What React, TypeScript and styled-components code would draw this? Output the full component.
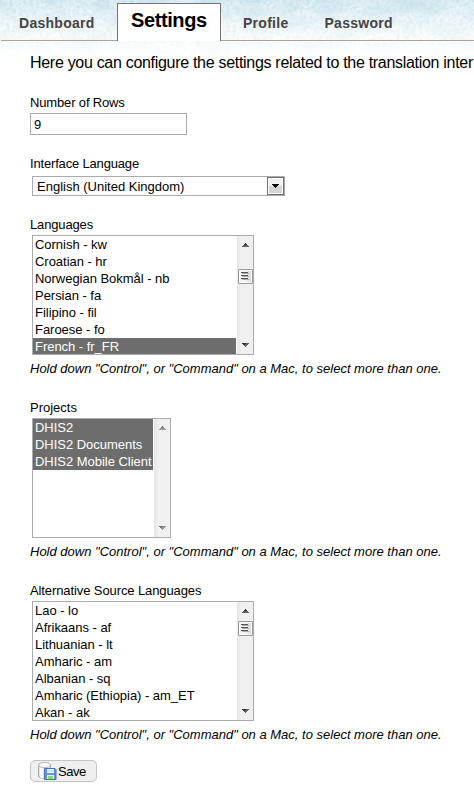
import React from "react";
import styled, { createGlobalStyle } from "styled-components";

const GlobalStyle = createGlobalStyle`
  * { box-sizing: border-box; }
  body {
    margin: 0;
    background: #fff;
    color: #000;
    font: 13px/17px "Liberation Sans", Arial, sans-serif;
    overflow: hidden;
  }
`;

const Page = styled.div`
  width: 474px;
  height: 795px;
  overflow: hidden;
  position: relative;
  isolation: isolate;
`;

const Sky = styled.svg`
  position: absolute;
  inset: 0 0 auto;
  z-index: -1;
`;

const Tabs = styled.nav`
  display: flex;
  align-items: flex-end;
  height: 41px;
  margin-left: 1px;
  white-space: nowrap;
`;

const Tab = styled.a<{ $w: number; $pad: number }>`
  width: ${(p) => p.$w}px;
  height: 41px;
  flex: none;
  padding: 14px 0 0 ${(p) => p.$pad}px;
  border-bottom: 1px solid #aaa49b;
  color: #48443f;
  font-weight: bold;
  font-size: 14px;
  line-height: 18px;
  letter-spacing: 0.27px;
`;

const ActiveTab = styled.a`
  width: 104px;
  height: 38px;
  flex: none;
  padding: 4px 0 0 13px;
  border: 1px solid #77736e;
  border-bottom: 0;
  background: #fff;
  font-weight: bold;
  font-size: 20px;
  line-height: 24px;
  letter-spacing: -0.4px;
`;

const Form = styled.form`
  padding: 12px 0 0 30px;
  white-space: nowrap;
`;

const Intro = styled.p`
  margin: 0 0 21px;
  font-size: 16px;
  line-height: 20px;
  letter-spacing: -0.3px;
`;

const Field = styled.section<{ $h: number }>`
  height: ${(p) => p.$h}px;
`;

const Label = styled.div<{ $track?: number }>`
  height: 19px;
  letter-spacing: ${(p) => p.$track ?? 0}px;
`;

const TextBox = styled.div`
  width: 157px;
  height: 22px;
  border: 1px solid #aaaaaf;
  padding: 3px 3px 0;
  line-height: 16px;
`;

const Dropdown = styled.div`
  display: flex;
  justify-content: space-between;
  width: 253px;
  height: 20px;
  margin: 2px 0 0 2px;
  border: 1px solid #aaaaaf;
  padding-left: 4px;
  line-height: 19px;
`;

const DropButton = styled.span`
  display: flex;
  align-items: center;
  justify-content: center;
  width: 17px;
  height: 18px;
  border: 1px solid #707070;
  box-shadow: inset 0 0 0 1px #fff;
  background: linear-gradient(#f0f0f0 50%, #d4d4d4 50%);
`;

const ListFrame = styled.div<{ $w: number }>`
  display: flex;
  width: ${(p) => p.$w}px;
  height: 120px;
  margin-left: 2px;
  border: 1px solid #aaaaaf;
  overflow: hidden;
`;

const Options = styled.div`
  flex: 1;
  min-width: 0;
  margin-right: 1px;
`;

const Option = styled.div<{ $on?: boolean }>`
  height: 17px;
  padding-left: 2px;
  line-height: 17px;
  letter-spacing: -0.03px;
  color: ${(p) => (p.$on ? "#fff" : "#000")};
  background: ${(p) => (p.$on ? "#6d6d6d" : "transparent")};
`;

const Track = styled.div`
  display: flex;
  flex-direction: column;
  align-items: center;
  width: 16px;
  height: 118px;
  padding: 7px 0;
  background: linear-gradient(90deg, #e5e5e5, #f0f0f0 4px, #f0f0f0);
`;

const Thumb = styled.div<{ $gap: number }>`
  display: flex;
  align-items: center;
  justify-content: center;
  width: 15px;
  height: 15px;
  margin-top: ${(p) => p.$gap}px;
  border: 1px solid #999;
  border-radius: 1px;
  box-shadow: inset 0 0 0 1px #fafafa;
  background: linear-gradient(90deg, #f4f4f4 45%, #d5d5d5);
`;

const Bottom = styled.div`
  display: flex;
  margin-top: auto;
`;

const Hint = styled.div`
  margin-top: 5px;
  font-style: italic;
`;

const SaveButton = styled.button`
  display: flex;
  align-items: center;
  width: 67px;
  height: 22px;
  margin-top: -5px;
  padding: 0 0 0 6px;
  gap: 1px;
  border: 1px solid #c5c5c5;
  border-radius: 5px;
  background: #efefef;
  color: #000;
  font: 13px/20px "Liberation Sans", Arial, sans-serif;
  letter-spacing: -0.5px;
`;

const SaveText = styled.span`
  padding-top: 1px;
`;

const NextTabText = styled.span`
  margin-left: 36px;
`;

function Arrow({ up, muted }: { up?: boolean; muted?: boolean }) {
  return (
    <svg width="7" height="4" shapeRendering="crispEdges">
      <path
        d={up ? "M3 0h1v1h1v1h1v1h1v1H0V3h1V2h1V1h1z" : "M0 0h7v1H6v1H5v1H4v1H3V3H2V2H1V1H0z"}
        fill={muted ? "#999" : "#606060"}
      />
      <path
        d={up ? "M3 0h1v1h1v1H2V1h1z" : "M0 0h4v1H3v1H1V1H0z"}
        fill={muted ? "#777" : "#303030"}
      />
    </svg>
  );
}

function ScrollBar({ thumb }: { thumb?: number }) {
  const muted = thumb === undefined;
  return (
    <Track>
      <Arrow up muted={muted} />
      {thumb !== undefined && (
        <Thumb $gap={thumb}>
          <svg width="8" height="9" shapeRendering="crispEdges">
            <path d="M0 .5h7M0 3.5h7M0 6.5h7" stroke="#555" />
            <path d="M1 1.5h7M1 4.5h7M1 7.5h7" stroke="#aaa" />
          </svg>
        </Thumb>
      )}
      <Bottom>
        <Arrow muted={muted} />
      </Bottom>
    </Track>
  );
}

interface ListProps {
  label: string;
  labelTrack?: number;
  width: number;
  items: string[];
  selected?: string[];
  thumb?: number;
}

function MultiSelect({ label, labelTrack, width, items, selected = [], thumb }: ListProps) {
  return (
    <Field $h={183}>
      <Label $track={labelTrack}>{label}</Label>
      <ListFrame $w={width}>
        <Options>
          {items.map((name) => (
            <Option key={name} $on={selected.includes(name)}>
              {name}
            </Option>
          ))}
        </Options>
        <ScrollBar thumb={thumb} />
      </ListFrame>
      <Hint>Hold down "Control", or "Command" on a Mac, to select more than one.</Hint>
    </Field>
  );
}

const languages = [
  "Cornish - kw",
  "Croatian - hr",
  "Norwegian Bokmål - nb",
  "Persian - fa",
  "Filipino - fil",
  "Faroese - fo",
  "French - fr_FR",
];

const projects = ["DHIS2", "DHIS2 Documents", "DHIS2 Mobile Client"];

const sources = [
  "Lao - lo",
  "Afrikaans - af",
  "Lithuanian - lt",
  "Amharic - am",
  "Albanian - sq",
  "Amharic (Ethiopia) - am_ET",
  "Akan - ak",
];

function SkyTexture() {
  return (
    <Sky width="474" height="60" aria-hidden="true">
      <defs>
        <linearGradient id="fade" x2="0" y2="1">
          <stop offset="0" stopColor="#d9eaf1" />
          <stop offset=".4" stopColor="#e7f2f6" />
          <stop offset=".72" stopColor="#f9fcfd" />
          <stop offset="1" stopColor="#fff" />
        </linearGradient>
        <linearGradient id="veil" x2="0" y2="1">
          <stop offset="0" stopColor="#fff" stopOpacity=".2" />
          <stop offset=".75" stopColor="#fff" stopOpacity=".8" />
          <stop offset="1" stopColor="#fff" />
        </linearGradient>
        <filter id="clouds" x="0" y="0" width="1" height="1" colorInterpolationFilters="sRGB">
          <feTurbulence type="fractalNoise" baseFrequency=".03 .06" numOctaves="3" seed="21" />
          <feColorMatrix values="0 0 0 0 .66  0 0 0 0 .82  0 0 0 0 .88  1.3 0 0 0 -.5" />
        </filter>
        <filter id="grain" x="0" y="0" width="1" height="1" colorInterpolationFilters="sRGB">
          <feTurbulence type="fractalNoise" baseFrequency=".3" numOctaves="2" seed="4" />
          <feColorMatrix values="0 0 0 0 .64  0 0 0 0 .81  0 0 0 0 .87  1.5 0 0 0 -.6" />
        </filter>
      </defs>
      <rect width="474" height="60" fill="url(#fade)" />
      <rect width="474" height="60" filter="url(#clouds)" />
      <rect width="474" height="60" filter="url(#grain)" />
      <rect width="474" height="60" fill="url(#veil)" />
    </Sky>
  );
}

function SaveIcon() {
  return (
    <svg width="20" height="20" viewBox="0 0 20 20">
      <path d="M1.500 4v11c0 3 12 3 12 0V4" fill="#e7e7e7" stroke="#aaa" />
      <path d="M3 6v10c1 1 2 1 3 1V7z" fill="#fff" />
      <ellipse cx="7.5" cy="4" rx="6" ry="2.5" fill="#fafafa" stroke="#b5b5b5" />
      <path d="M7.500 7.500h10.500l1 1v10h-11.500z" fill="#6592d6" stroke="#4571bc" />
      <path d="M10 8h7v4h-7z" fill="#f4f9ff" />
      <path d="M10 10h7" stroke="#a9c5eb" />
      <path d="M10 14h7v4h-7z" fill="#e2f5d9" />
      <path d="M11 15h5v3h-5z" fill="#8cd96a" />
    </svg>
  );
}

export default function App() {
  return (
    <>
      <GlobalStyle />
      <Page>
        <SkyTexture />
        <Tabs>
          <Tab $w={116} $pad={18}>Dashboard</Tab>
          <ActiveTab>Settings</ActiveTab>
          <Tab $w={253} $pad={22}>
            Profile<NextTabText>Password</NextTabText>
          </Tab>
        </Tabs>
        <Form>
          <Intro>Here you can configure the settings related to the translation inter</Intro>
          <Field $h={61}>
            <Label $track={-0.15}>Number of Rows</Label>
            <TextBox>9</TextBox>
          </Field>
          <Field $h={61}>
            <Label $track={-0.17}>Interface Language</Label>
            <Dropdown>
              English (United Kingdom)
              <DropButton>
                <svg width="7" height="4" shapeRendering="crispEdges">
                  <path d="M0 0h7v1H6v1H5v1H4v1H3V3H2V2H1V1H0z" />
                </svg>
              </DropButton>
            </Dropdown>
          </Field>
          <MultiSelect label="Languages" labelTrack={-0.15} width={222} items={languages} selected={["French - fr_FR"]} thumb={22} />
          <MultiSelect label="Projects" width={139} items={projects} selected={projects} />
          <MultiSelect label="Alternative Source Languages" labelTrack={-0.1} width={222} items={sources} thumb={8} />
          <SaveButton type="button">
            <SaveIcon />
            <SaveText>Save</SaveText>
          </SaveButton>
        </Form>
      </Page>
    </>
  );
}
